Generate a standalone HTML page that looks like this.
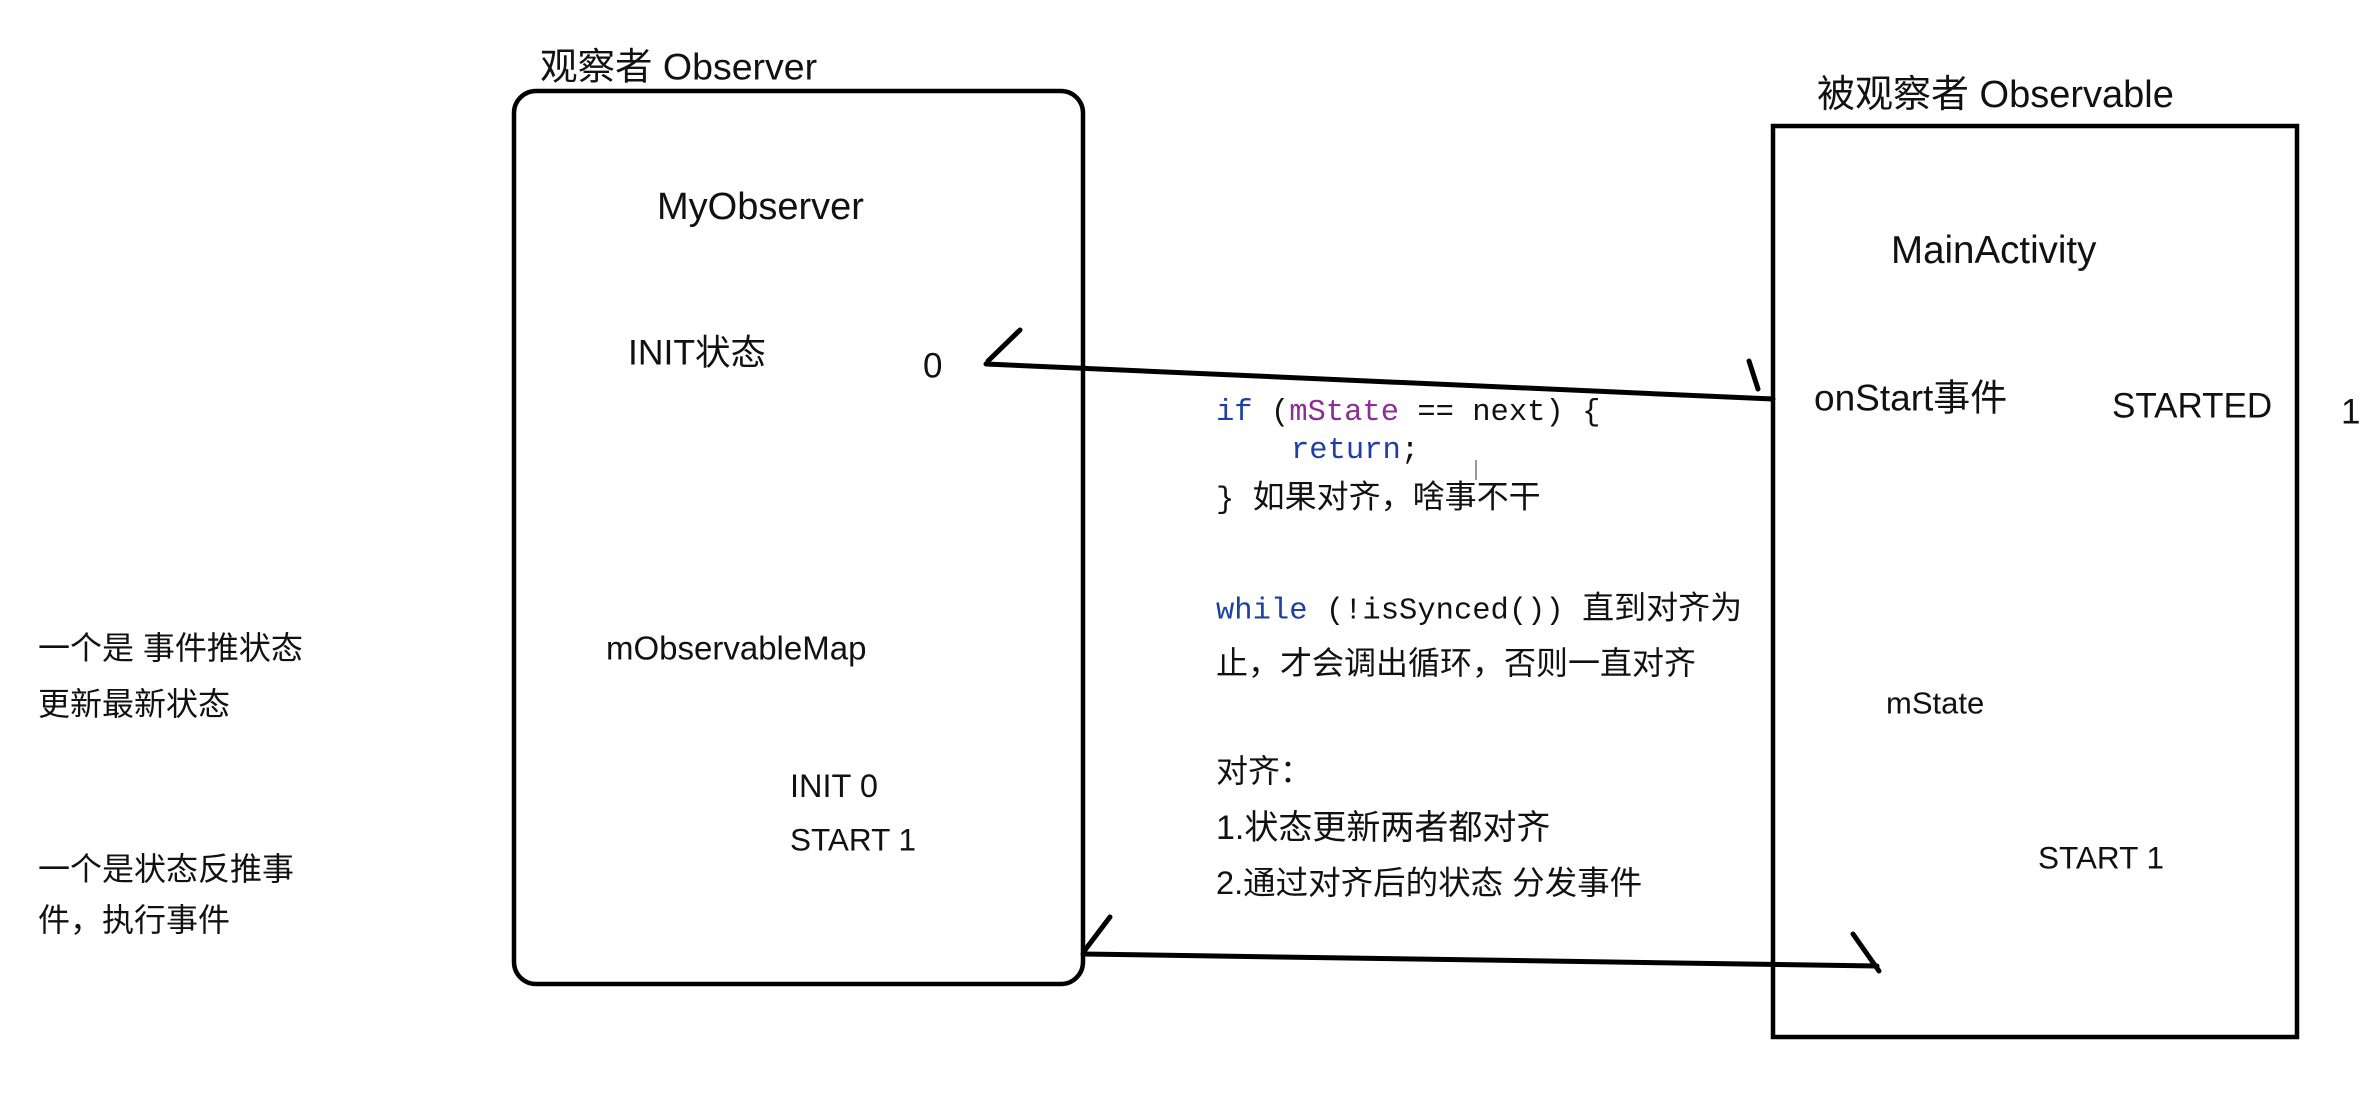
<!DOCTYPE html>
<html><head><meta charset="utf-8"><style>
html,body{margin:0;padding:0;background:#fff;}
body{width:2374px;height:1094px;position:relative;overflow:hidden;font-family:"Liberation Sans","Noto Sans CJK SC",sans-serif;color:#111;}
.t{position:absolute;white-space:nowrap;line-height:1;transform:translateY(-50%);}
.m{font-family:"Liberation Mono","Noto Sans CJK SC",monospace;font-size:30.5px;}
.kw{color:#1d3fa6}.pu{color:#8b2f98}
.cj{font-family:"Liberation Sans","Noto Sans CJK SC",sans-serif;font-size:32px;}
</style></head><body>
<svg width="2374" height="1094" style="position:absolute;left:0;top:0">
<rect x="514" y="91" width="569" height="893" rx="22" ry="22" fill="none" stroke="#000" stroke-width="4.5"/>
<rect x="1773" y="126" width="524" height="911" fill="none" stroke="#000" stroke-width="4.5"/>
<g stroke="#000" stroke-width="5" stroke-linecap="round" fill="none">
<line x1="986" y1="364" x2="1773" y2="399"/>
<line x1="988" y1="361" x2="1020" y2="330"/>
<line x1="1749" y1="361" x2="1758" y2="389"/>
<line x1="1083" y1="954" x2="1877" y2="966"/>
<line x1="1085" y1="950" x2="1110" y2="917"/>
<line x1="1853" y1="934" x2="1879" y2="971"/>
</g>
<line x1="1476" y1="460" x2="1476" y2="480" stroke="#999" stroke-width="2"/>
</svg>
<div class="t" style="left:540px;top:67px;font-size:37.5px">观察者 Observer</div>
<div class="t" style="left:657px;top:207px;font-size:38px">MyObserver</div>
<div class="t" style="left:628px;top:353px;font-size:35.5px">INIT状态</div>
<div class="t" style="left:923px;top:366px;font-size:35px">0</div>
<div class="t" style="left:606px;top:648px;font-size:33px">mObservableMap</div>
<div class="t" style="left:790px;top:786px;font-size:32.5px">INIT 0</div>
<div class="t" style="left:790px;top:840px;font-size:31.5px">START 1</div>
<div class="t" style="left:1817px;top:95px;font-size:38px">被观察者 Observable</div>
<div class="t" style="left:1891px;top:251px;font-size:38.5px">MainActivity</div>
<div class="t" style="left:1814px;top:398px;font-size:37px">onStart事件</div>
<div class="t" style="left:2112px;top:406px;font-size:35px">STARTED</div>
<div class="t" style="left:2341px;top:412px;font-size:35px">1</div>
<div class="t" style="left:1886px;top:703px;font-size:31px">mState</div>
<div class="t" style="left:2038px;top:858px;font-size:31.5px">START 1</div>
<div class="t" style="left:38px;top:648px;font-size:32px">一个是 事件推状态</div>
<div class="t" style="left:38px;top:704px;font-size:32px">更新最新状态</div>
<div class="t" style="left:38px;top:869px;font-size:32px">一个是状态反推事</div>
<div class="t" style="left:38px;top:920px;font-size:32px">件，执行事件</div>
<div class="t m" style="left:1216px;top:413px"><span class="kw">if</span> (<span class="pu">mState</span> == next) {</div>
<div class="t m" style="left:1291px;top:451px"><span class="kw">return</span>;</div>
<div class="t m" style="left:1216px;top:498px">} <span class="cj">如果对齐，啥事不干</span></div>
<div class="t m" style="left:1216px;top:609px"><span class="kw">while</span> (!isSynced()) <span class="cj">直到对齐为</span></div>
<div class="t cj" style="left:1216px;top:663px">止，才会调出循环，否则一直对齐</div>
<div class="t cj" style="left:1216px;top:771px">对齐：</div>
<div class="t cj" style="left:1216px;top:828px;font-size:34px">1.状态更新两者都对齐</div>
<div class="t cj" style="left:1216px;top:883px;font-size:32.5px">2.通过对齐后的状态 分发事件</div>
</body></html>
